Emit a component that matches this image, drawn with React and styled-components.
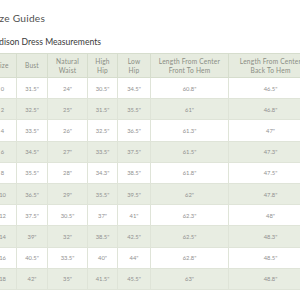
import React from "react";
import styled, { createGlobalStyle } from "styled-components";

const GlobalStyle = createGlobalStyle`
  body {
    margin: 0;
    background: #ffffff;
    font-family: "Lato", "Liberation Sans", sans-serif;
  }
`;

const Page = styled.div`
  width: 340px;
  margin-left: -12px;
  padding-top: 11px;
`;

const Title = styled.h1`
  margin: 0 0 0 3px;
  font-size: 10.2px;
  line-height: 14px;
  font-weight: 400;
  color: #505050;
  letter-spacing: 0.25px;
`;

const Subtitle = styled.h2`
  margin: 11px 0 5px -1px;
  font-size: 8.6px;
  line-height: 12px;
  font-weight: 400;
  color: #3a3a3a;
`;

const Table = styled.table`
  border-collapse: collapse;
  table-layout: fixed;
  width: 324px;
`;

const Col = styled.col`
  width: ${(p) => p.$w}px;
`;

const Head = styled.th`
  height: 23px;
  padding: 0;
  background: #e6ebdf;
  border: 1px solid #d6ddcd;
  font-size: 6.6px;
  line-height: 8.5px;
  font-weight: 400;
  color: #8a8d84;
  text-align: center;
  letter-spacing: 0.2px;
`;

const Row = styled.tr`
  height: 21.2px;
  background: ${(p) => (p.$shaded ? "#e8ede2" : "#ffffff")};
`;

const Cell = styled.td`
  padding: 0;
  border: 1px solid #dfe4d8;
  font-size: 5.8px;
  color: #909090;
  text-align: center;
`;

const columns = [
  { label: "Size", w: 28 },
  { label: "Bust", w: 31 },
  { label: ["Natural", "Waist"], w: 40 },
  { label: ["High", "Hip"], w: 30 },
  { label: ["Low", "Hip"], w: 33 },
  { label: ["Length From Center", "Front To Hem"], w: 78 },
  { label: ["Length From Center", "Back To Hem"], w: 84 },
];

const rows = [
  ["0", "31.5", "24", "30.5", "34.5", "60.8", "46.5"],
  ["2", "32.5", "25", "31.5", "35.5", "61", "46.8"],
  ["4", "33.5", "26", "32.5", "36.5", "61.3", "47"],
  ["6", "34.5", "27", "33.5", "37.5", "61.5", "47.3"],
  ["8", "35.5", "28", "34.3", "38.5", "61.8", "47.5"],
  ["10", "36.5", "29", "35.5", "39.5", "62", "47.8"],
  ["12", "37.5", "30.5", "37", "41", "62.3", "48"],
  ["14", "39", "32", "38.5", "42.5", "62.5", "48.3"],
  ["16", "40.5", "33.5", "40", "44", "62.8", "48.5"],
  ["18", "42", "35", "41.5", "45.5", "63", "48.8"],
];

export default function App() {
  return (
    <Page>
      <GlobalStyle />
      <Title>Size Guides</Title>
      <Subtitle>Madison Dress Measurements</Subtitle>
      <Table>
        <colgroup>
          {columns.map((c, i) => (
            <Col key={i} $w={c.w} />
          ))}
        </colgroup>
        <thead>
          <tr>
            {columns.map((c, i) => (
              <Head key={i}>
                {Array.isArray(c.label) ? (
                  <>
                    {c.label[0]}
                    <br />
                    {c.label[1]}
                  </>
                ) : (
                  c.label
                )}
              </Head>
            ))}
          </tr>
        </thead>
        <tbody>
          {rows.map((r, i) => (
            <Row key={r[0]} $shaded={i % 2 === 1}>
              {r.map((v, j) => (
                <Cell key={j}>{j === 0 ? v : `${v}"`}</Cell>
              ))}
            </Row>
          ))}
        </tbody>
      </Table>
    </Page>
  );
}
